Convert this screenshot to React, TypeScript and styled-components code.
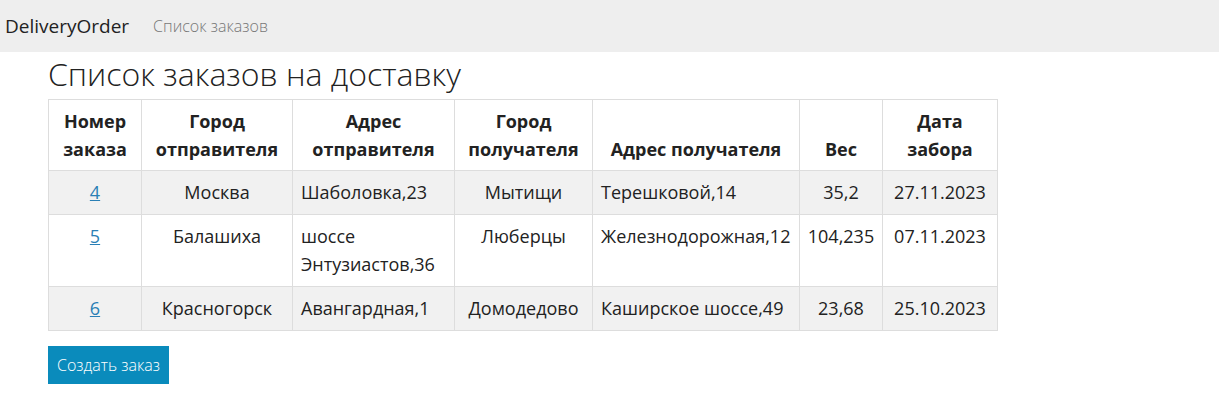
import React from 'react';
import styled, { createGlobalStyle } from 'styled-components';

const GlobalStyle = createGlobalStyle`
	body {
		margin: 0;
		font-family: 'Open Sans', 'Liberation Sans', sans-serif;
		font-size: 16px;
		color: #222;
		background: #fff;
	}
`;

interface Order {
	id: number;
	senderCity: string;
	senderAddress: string;
	receiverCity: string;
	receiverAddress: string;
	weight: string;
	date: string;
}

const orders: Order[] = [
	{ id: 4, senderCity: 'Москва', senderAddress: 'Шаболовка,23', receiverCity: 'Мытищи', receiverAddress: 'Терешковой,14', weight: '35,2', date: '27.11.2023' },
	{ id: 5, senderCity: 'Балашиха', senderAddress: 'шоссе Энтузиастов,36', receiverCity: 'Люберцы', receiverAddress: 'Железнодорожная,12', weight: '104,235', date: '07.11.2023' },
	{ id: 6, senderCity: 'Красногорск', senderAddress: 'Авангардная,1', receiverCity: 'Домодедово', receiverAddress: 'Каширское шоссе,49', weight: '23,68', date: '25.10.2023' }
];

const Navbar = styled.nav`
	display: flex;
	align-items: center;
	height: 52px;
	padding-left: 5px;
	background: #eeeeee;
	gap: 24px;
`;

const Brand = styled.a`
	font-size: 19px;
	font-weight: 400;
	color: #222;
	text-decoration: none;
`;

const NavLink = styled.a`
	font-size: 16px;
	font-weight: 300;
	color: #777;
	text-decoration: none;
`;

const Container = styled.main`
	padding: 0 48px;
`;

const Title = styled.h2`
	margin: 2px 0 5px;
	font-size: 32px;
	font-weight: 300;
	line-height: 40px;
	color: #222;
`;

const Table = styled.table`
	border-collapse: collapse;
	table-layout: fixed;
	width: 949px;
	font-size: 18px;
	line-height: 28px;
`;

const Th = styled.th<{ $w: number }>`
	box-sizing: border-box;
	width: ${(p) => p.$w}px;
	padding: 7px 4px;
	border: 1px solid #dddddd;
	font-weight: 700;
	text-align: center;
	vertical-align: bottom;
`;

const Row = styled.tr<{ $striped: boolean }>`
	background: ${(p) => (p.$striped ? '#f1f1f1' : '#fff')};
`;

const Td = styled.td<{ $left?: boolean }>`
	padding: 7px 4px 8px ${(p) => (p.$left ? '8px' : '4px')};
	border: 1px solid #dddddd;
	text-align: ${(p) => (p.$left ? 'left' : 'center')};
	vertical-align: top;
`;

const OrderLink = styled.a`
	color: #2a7fb5;
	text-decoration: underline;
`;

const CreateButton = styled.button`
	margin-top: 15px;
	height: 38px;
	padding: 0 9px;
	border: none;
	background: #0a8bbc;
	color: #fff;
	font-family: 'Open Sans', 'Liberation Sans', sans-serif;
	font-size: 16px;
	font-weight: 300;
	cursor: pointer;
`;

const columns = [
	{ title: 'Номер заказа', w: 93 },
	{ title: 'Город отправителя', w: 151 },
	{ title: 'Адрес отправителя', w: 162 },
	{ title: 'Город получателя', w: 138 },
	{ title: 'Адрес получателя', w: 207 },
	{ title: 'Вес', w: 83 },
	{ title: 'Дата забора', w: 115 }
];

const App = () => {
	return (
		<>
			<GlobalStyle />
			<Navbar>
				<Brand href='#'>DeliveryOrder</Brand>
				<NavLink href='#'>Список заказов</NavLink>
			</Navbar>
			<Container>
				<Title>Список заказов на доставку</Title>
				<Table>
					<thead>
						<tr>
							{columns.map((c) => (
								<Th
									key={c.title}
									$w={c.w}
								>
									{c.title}
								</Th>
							))}
						</tr>
					</thead>
					<tbody>
						{orders.map((o, i) => (
							<Row
								key={o.id}
								$striped={i % 2 === 0}
							>
								<Td>
									<OrderLink href='#'>{o.id}</OrderLink>
								</Td>
								<Td>{o.senderCity}</Td>
								<Td $left>{o.senderAddress}</Td>
								<Td>{o.receiverCity}</Td>
								<Td $left>{o.receiverAddress}</Td>
								<Td>{o.weight}</Td>
								<Td>{o.date}</Td>
							</Row>
						))}
					</tbody>
				</Table>
				<CreateButton>Создать заказ</CreateButton>
			</Container>
		</>
	);
};

export default App;
